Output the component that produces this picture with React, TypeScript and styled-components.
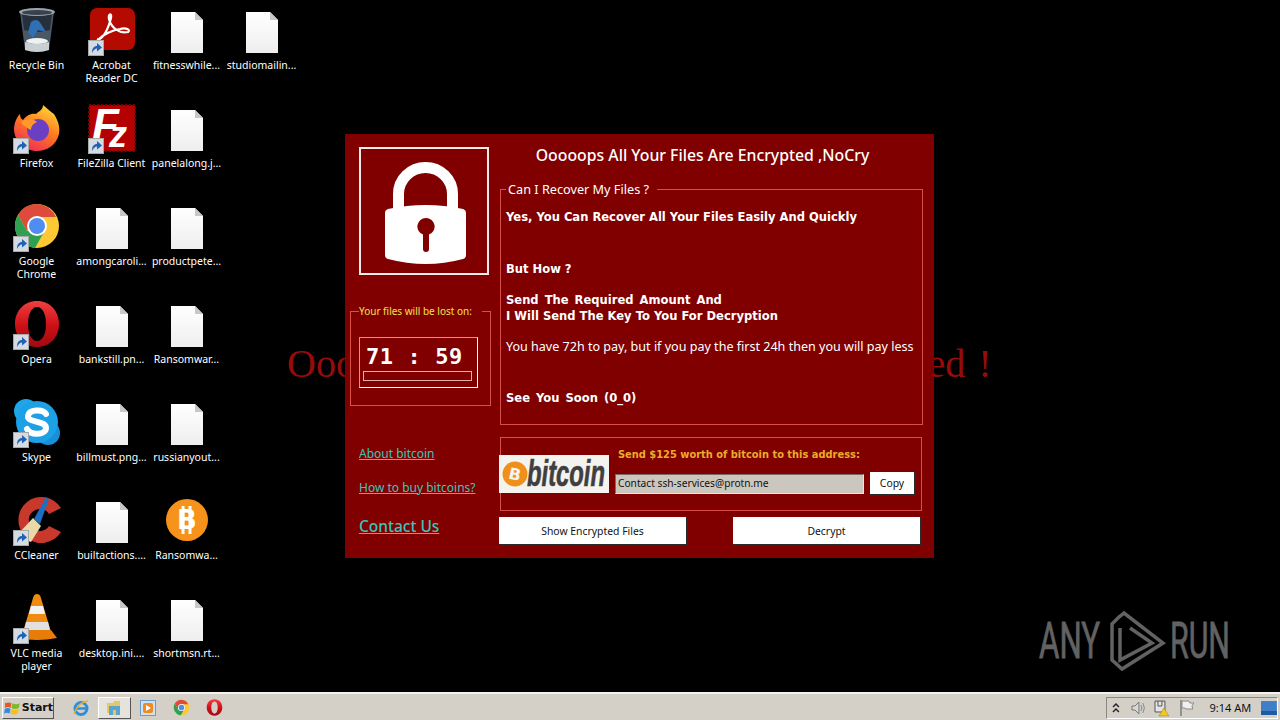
import React from 'react';
import styled, { createGlobalStyle } from 'styled-components';

const MAROON = '#800000';
const EDGE = '#d8504c';
const LINK = '#3cc4bc';
const UI_FONT = '"Noto Sans", "DejaVu Sans", sans-serif';

const GlobalStyle = createGlobalStyle`
  html, body {
    margin: 0;
    height: 100%;
    background: #000;
    overflow: hidden;
  }
  #root {
    height: 100%;
  }
`;

const Screen = styled.div`
  height: 720px;
  display: flex;
  flex-flow: column;
  font-family: ${UI_FONT};
`;

const Desktop = styled.div`
  position: relative;
  flex: 1;
  background: #000;
`;

const IconGrid = styled.div`
  display: grid;
  grid-template-columns: repeat(4, 75px);
  grid-auto-rows: 98px;
  margin-left: -1px;
`;

const IconCell = styled.div<{ $col: number; $row: number }>`
  grid-column: ${props => props.$col};
  grid-row: ${props => props.$row};
  display: flex;
  flex-flow: column;
  align-items: center;
`;

const IconArt = styled.div`
  position: relative;
  width: 48px;
  height: 48px;
  margin-top: 6px;

  svg {
    display: block;
  }
`;

const ShortcutBadge = styled.svg`
  position: absolute;
  left: 0;
  bottom: -2px;
`;

const IconLabel = styled.div`
  width: 75px;
  margin-top: 5px;
  color: #fff;
  font-size: 10.5px;
  line-height: 13px;
  text-align: center;
  white-space: pre-line;
`;

const Wallpaper = styled.div`
  position: absolute;
  left: 287px;
  top: 339px;
  color: #960c0c;
  font: 40px/50px 'Liberation Serif', serif;
  word-spacing: 12.6px;
  white-space: nowrap;
`;

const WallpaperEnd = styled.span`
  word-spacing: 3px;
`;

const Watermark = styled.svg`
  position: absolute;
  left: 1036px;
  top: 606px;
`;

const Window = styled.div`
  position: absolute;
  left: 345px;
  top: 134px;
  width: 589px;
  height: 424px;
  box-sizing: border-box;
  display: flex;
  gap: 8px;
  padding: 13px 13px 0 5px;
  background: ${MAROON};
`;

const LeftColumn = styled.div`
  width: 141px;
  display: flex;
  flex-flow: column;
`;

const LockFrame = styled.div`
  width: 130px;
  height: 128px;
  box-sizing: border-box;
  margin-left: 9px;
  border: 2px solid #f4eaea;

  svg {
    display: block;
  }
`;

const TimerBox = styled.fieldset`
  width: 141px;
  height: 101px;
  box-sizing: border-box;
  margin: 30px 0 0;
  padding: 0 0 0 8px;
  border: 1px solid ${EDGE};
`;

const TimerLegend = styled.legend`
  padding: 0 10px 0 0;
  color: #f2e04b;
  font-size: 10px;
  line-height: 13px;
`;

const Clock = styled.div`
  width: 119px;
  height: 51px;
  box-sizing: border-box;
  margin-top: 19px;
  padding: 7px 0 0 3px;
  border: 1px solid #fff;
  border-top-color: #b9a0a0;
  border-left-color: #b9a0a0;
`;

const ClockDigits = styled.div`
  padding-left: 3px;
  color: #fff;
  font: bold 22px/24px 'DejaVu Sans Mono', monospace;
  letter-spacing: 0.6px;
  white-space: pre;
`;

const ClockBar = styled.div`
  width: 109px;
  height: 10px;
  box-sizing: border-box;
  margin-top: 2px;
  border: 1px solid #e2b0b0;
`;

const LinkList = styled.div`
  display: flex;
  flex-flow: column;
  align-items: flex-start;
  margin: 40px 0 0 9px;
`;

const HelpLink = styled.a<{ $big?: boolean }>`
  color: ${LINK};
  font-size: ${props => (props.$big ? '15.5px' : '12px')};
  font-weight: ${props => (props.$big ? 500 : 400)};
  line-height: ${props => (props.$big ? '20px' : '16px')};
  margin-top: ${props => (props.$big ? '2px' : 0)};
  margin-bottom: ${props => (props.$big ? 0 : '18px')};
  text-decoration: underline;
`;

const RightColumn = styled.div`
  flex: 1;
  display: flex;
  flex-flow: column;
`;

const Title = styled.div`
  height: 30px;
  padding-right: 17px;
  color: #fff;
  font-size: 15.8px;
  font-weight: 500;
  line-height: 17px;
  text-align: center;
  white-space: nowrap;
`;

const InfoBox = styled.fieldset`
  width: 421px;
  height: 243px;
  box-sizing: border-box;
  margin: 5px 0 0 1px;
  padding: 0 0 0 5px;
  border: 1px solid ${EDGE};
`;

const InfoLegend = styled.legend`
  margin-left: 0;
  padding: 0 8px 0 2px;
  color: #fff;
  font-size: 12.7px;
  line-height: 15px;
  white-space: nowrap;
`;

const Strong = styled.div<{ $top: number; $wide?: boolean }>`
  margin-top: ${props => props.$top}px;
  color: #fff;
  font: bold 11.55px/16px 'DejaVu Sans', sans-serif;
  word-spacing: ${props => (props.$wide ? '2px' : 0)};
  white-space: nowrap;
`;

const Note = styled.div`
  width: 416px;
  height: 18px;
  margin-top: 14px;
  background: ${MAROON};
  color: #fff;
  font-size: 12.55px;
  line-height: 18px;
  white-space: nowrap;
`;

const PayBox = styled.div`
  position: relative;
  width: 422px;
  height: 74px;
  box-sizing: border-box;
  margin: 12px 0 0 1px;
  padding: 9px 5px 0 114px;
  border: 1px solid ${EDGE};
`;

const BitcoinLogo = styled.svg`
  position: absolute;
  left: -2px;
  top: 17px;
`;

const PayText = styled.div`
  padding-left: 3px;
  color: #e8ac2c;
  font: bold 9.9px/16px 'DejaVu Sans', sans-serif;
  white-space: nowrap;
`;

const PayRow = styled.div`
  display: flex;
  align-items: center;
  justify-content: space-between;
  margin-top: 9px;
`;

const AddressField = styled.div`
  width: 249px;
  height: 20px;
  box-sizing: border-box;
  padding-left: 2px;
  border: 1px solid #7c6a6a;
  border-right-color: #e8e4dc;
  border-bottom-color: #e8e4dc;
  background: #cbc7bf;
  color: #111;
  font-size: 10.2px;
  line-height: 17px;
  white-space: nowrap;
`;

const WinButton = styled.button<{ $width: number; $height: number }>`
  width: ${props => props.$width}px;
  height: ${props => props.$height}px;
  box-sizing: border-box;
  padding: 0;
  border: none;
  border-right: 2px solid #2a2a2a;
  border-bottom: 2px solid #2a2a2a;
  background: #fff;
  color: #111;
  font-family: ${UI_FONT};
  font-size: 10.4px;
`;

const ButtonRow = styled.div`
  display: flex;
  justify-content: space-between;
  width: 423px;
  margin-top: 6px;
`;

const Taskbar = styled.div`
  height: 28px;
  box-sizing: border-box;
  display: flex;
  align-items: center;
  padding: 1px 2px 0;
  border-top: 2px solid #f4f2ee;
  background: #d4d0c8;
`;

const StartButton = styled.div`
  width: 52px;
  height: 22px;
  box-sizing: border-box;
  display: flex;
  align-items: center;
  gap: 1px;
  padding-left: 1px;
  border: 1px solid #fff;
  border-right-color: #555;
  border-bottom-color: #555;
  color: #111;
  font: bold 11px 'DejaVu Sans', sans-serif;
`;

const QuickLaunch = styled.div`
  display: flex;
  align-items: center;
  margin-left: 10px;
`;

const QuickItem = styled.div<{ $active?: boolean }>`
  width: 33.5px;
  height: 22px;
  box-sizing: border-box;
  display: flex;
  align-items: center;
  justify-content: center;
  border: 1px solid transparent;
  ${props =>
    props.$active &&
    `
    border-color: #fff #555 #555 #fff;
    background: #e6e3dc;
  `}
`;

const Tray = styled.div`
  width: 172px;
  height: 22px;
  box-sizing: border-box;
  display: flex;
  align-items: center;
  margin-left: auto;
  padding-left: 4px;
  border: 1px solid #8a8780;
  border-right-color: #fff;
  border-bottom-color: #fff;
`;

const TrayGlyph = styled.svg<{ $gap: number }>`
  margin-left: ${props => props.$gap}px;
`;

const TrayClock = styled.div`
  width: 52px;
  margin-left: 10px;
  color: #111;
  font-size: 11px;
  text-align: center;
  white-space: nowrap;
`;

const shortcutBadge = (
  <ShortcutBadge width="16" height="16" viewBox="0 0 16 16">
    <rect x="0.5" y="0.5" width="15" height="15" fill="#d4dbe2" stroke="#a8a8a8" />
    <path d="M4 13 C4 8 6 6 9 6 V3 L14 7.5 L9 11.5 V8.5 C7 8.5 5.5 10 4 13Z" fill="#1f62b4" />
  </ShortcutBadge>
);

const RecycleArt = () => (
  <svg width="48" height="48" viewBox="0 0 48 48">
    <path d="M7 6 L41 6 L36 44 Q24 48 12 44Z" fill="#4a5866" />
    <path d="M9 8 L39 8 L37 24 Q24 28 11 24Z" fill="#26303c" />
    <ellipse cx="24" cy="6" rx="18" ry="4" fill="#98a4ae" />
    <ellipse cx="24" cy="6.5" rx="15" ry="2.5" fill="#39424c" />
    <path d="M18 16 Q24 11 28 18 L33 26 L25 24 L20 32 L15 26Z" fill="#2f6fb4" />
    <path d="M12 36 Q24 40 36 36 L36 44 Q24 48 12 44Z" fill="#c9d0d4" />
    <ellipse cx="24" cy="35" rx="11" ry="3" fill="#eef1f2" />
  </svg>
);

const AcrobatArt = () => (
  <svg width="48" height="48" viewBox="0 0 48 48">
    <rect x="2" y="2" width="45" height="42" rx="7" fill="#b30b00" />
    <path
      d="M9 33 C14 35 20 24 23 12 C24 6 20 8 21 13 C23 22 32 28 40 26 C43 24 38 21 32 23 C25 24 16 28 11 33"
      fill="none"
      stroke="#fff"
      strokeWidth="2.2"
    />
  </svg>
);

const FileArt = () => (
  <svg width="48" height="48" viewBox="0 0 48 48">
    <defs>
      <linearGradient id="pageFill" x1="0" y1="0" x2="0" y2="1">
        <stop offset="0" stopColor="#ffffff" />
        <stop offset="1" stopColor="#eeeeee" />
      </linearGradient>
    </defs>
    <path d="M8 6 H32 L40 14 V47 H8Z" fill="url(#pageFill)" />
    <path d="M32 6 L40 14 H32Z" fill="#c8c8c8" />
  </svg>
);

const FirefoxArt = () => (
  <svg width="48" height="48" viewBox="0 0 48 48">
    <defs>
      <linearGradient id="foxFlame" x1="0.7" y1="0" x2="0.2" y2="1">
        <stop offset="0" stopColor="#ffd43a" />
        <stop offset="0.45" stopColor="#ff7a1f" />
        <stop offset="1" stopColor="#f0245c" />
      </linearGradient>
    </defs>
    <path
      d="M30 1 C36 6 38 8 41 10 C46 18 47 24 46 30 C43 42 33 47 24 47 C12 47 2 38 1 26 C1 20 3 14 7 10 C7 13 8 15 10 16 C13 12 18 9 23 10 C26 7 30 6 30 1Z"
      fill="url(#foxFlame)"
    />
    <circle cx="25" cy="26" r="11" fill="#6a3fc4" />
    <path d="M8 18 C14 14 20 15 24 18 C20 20 18 22 18 26 C14 24 10 22 8 18Z" fill="#ff9a28" />
  </svg>
);

const FilezillaArt = () => (
  <svg width="48" height="48" viewBox="0 0 48 48">
    <rect x="1" y="1" width="46" height="46" fill="#b40000" stroke="#7a0000" strokeWidth="2" strokeDasharray="2 2" />
    <text x="4" y="36" fill="#fff" fontFamily="Liberation Sans, sans-serif" fontStyle="italic" fontWeight="700" fontSize="44">
      F
    </text>
    <text x="21" y="43" fill="#fff" fontFamily="Liberation Sans, sans-serif" fontStyle="italic" fontWeight="700" fontSize="36">
      z
    </text>
  </svg>
);

const ChromeArt = ({ size = 48 }: { size?: number }) => (
  <svg width={size} height={size} viewBox="0 0 48 48">
    <circle cx="24" cy="24" r="22" fill="#fcc934" />
    <path d="M24 2 A22 22 0 0 0 5 13 L14 29 L24 15 H43 A22 22 0 0 0 24 2Z" fill="#de4b3c" />
    <path d="M5 13 A22 22 0 0 0 22 46 L31 30 L14 29Z" fill="#2f9f52" />
    <circle cx="24" cy="24" r="10" fill="#fff" />
    <circle cx="24" cy="24" r="8" fill="#4f8df0" />
  </svg>
);

const OperaArt = ({ size = 48 }: { size?: number }) => (
  <svg width={size} height={size} viewBox="0 0 48 48">
    <defs>
      <linearGradient id="operaRed" x1="0" y1="0" x2="0" y2="1">
        <stop offset="0" stopColor="#f04040" />
        <stop offset="0.55" stopColor="#cc0f16" />
        <stop offset="1" stopColor="#a00a10" />
      </linearGradient>
    </defs>
    <path
      fillRule="evenodd"
      d="M24 1 C37 1 46 11 46 24 C46 37 37 47 24 47 C11 47 2 37 2 24 C2 11 11 1 24 1Z M24 7 C18 7 15 15 15 24 C15 33 18 41 24 41 C30 41 33 33 33 24 C33 15 30 7 24 7Z"
      fill="url(#operaRed)"
    />
  </svg>
);

const SkypeArt = () => (
  <svg width="48" height="48" viewBox="0 0 48 48">
    <circle cx="13" cy="13" r="12" fill="#1ea5ea" />
    <circle cx="35" cy="35" r="12" fill="#1790d8" />
    <circle cx="24" cy="24" r="21" fill="#1ca0e6" />
    <path
      d="M33 16 C30 11 16 11 15 18 C14 25 33 22 33 30 C33 37 18 38 14 31"
      fill="none"
      stroke="#fff"
      strokeWidth="6"
      strokeLinecap="round"
    />
  </svg>
);

const CcleanerArt = () => (
  <svg width="48" height="48" viewBox="0 0 48 48">
    <path d="M48 12 A23 23 0 1 0 48 36 L36 30 A11 11 0 1 1 36 18Z" fill="#c8392c" />
    <path d="M6 37 L20 22 L28 30 L18 46 Q10 44 6 37Z" fill="#e9d9a8" />
    <path d="M21 23 L33 1 L36 3 L27 28Z" fill="#1f6fc0" />
  </svg>
);

const BitcoinArt = () => (
  <svg width="48" height="48" viewBox="0 0 48 48">
    <circle cx="24" cy="24" r="21" fill="#f7931a" />
    <path d="M20 10 V38 M27 10 V38" stroke="#fff" strokeWidth="3" />
    <text x="24" y="33" textAnchor="middle" fill="#fff" fontFamily="DejaVu Sans, sans-serif" fontWeight="700" fontSize="26">
      B
    </text>
  </svg>
);

const VlcArt = () => (
  <svg width="48" height="48" viewBox="0 0 48 48">
    <path d="M24 0 Q27 0 28 4 L38 38 H10 L20 4 Q21 0 24 0Z" fill="#f08a10" />
    <path d="M18 12 H30 L32 20 H16Z" fill="#f2f2f2" />
    <path d="M13 28 H35 L37 36 H11Z" fill="#e0e0e0" />
    <path d="M4 44 L10 36 H38 L44 44 Q24 48 4 44Z" fill="#e87c08" />
  </svg>
);

const desktopIcons = [
  { col: 1, row: 1, label: 'Recycle Bin', art: <RecycleArt /> },
  { col: 2, row: 1, label: 'Acrobat\nReader DC', art: <AcrobatArt />, link: true },
  { col: 3, row: 1, label: 'fitnesswhile...', art: <FileArt /> },
  { col: 4, row: 1, label: 'studiomailin...', art: <FileArt /> },
  { col: 1, row: 2, label: 'Firefox', art: <FirefoxArt />, link: true },
  { col: 2, row: 2, label: 'FileZilla Client', art: <FilezillaArt />, link: true },
  { col: 3, row: 2, label: 'panelalong.j...', art: <FileArt /> },
  { col: 1, row: 3, label: 'Google\nChrome', art: <ChromeArt />, link: true },
  { col: 2, row: 3, label: 'amongcaroli...', art: <FileArt /> },
  { col: 3, row: 3, label: 'productpete...', art: <FileArt /> },
  { col: 1, row: 4, label: 'Opera', art: <OperaArt />, link: true },
  { col: 2, row: 4, label: 'bankstill.pn...', art: <FileArt /> },
  { col: 3, row: 4, label: 'Ransomwar...', art: <FileArt /> },
  { col: 1, row: 5, label: 'Skype', art: <SkypeArt />, link: true },
  { col: 2, row: 5, label: 'billmust.png...', art: <FileArt /> },
  { col: 3, row: 5, label: 'russianyout...', art: <FileArt /> },
  { col: 1, row: 6, label: 'CCleaner', art: <CcleanerArt />, link: true },
  { col: 2, row: 6, label: 'builtactions....', art: <FileArt /> },
  { col: 3, row: 6, label: 'Ransomwa...', art: <BitcoinArt /> },
  { col: 1, row: 7, label: 'VLC media\nplayer', art: <VlcArt />, link: true },
  { col: 2, row: 7, label: 'desktop.ini....', art: <FileArt /> },
  { col: 3, row: 7, label: 'shortmsn.rt...', art: <FileArt /> },
];

const App = () => (
  <>
    <GlobalStyle />
    <Screen>
      <Desktop>
        <Wallpaper>
          Ooops, your files have been <WallpaperEnd>encrypted !</WallpaperEnd>
        </Wallpaper>
        <IconGrid>
          {desktopIcons.map(icon => (
            <IconCell key={icon.label} $col={icon.col} $row={icon.row}>
              <IconArt>
                {icon.art}
                {icon.link && shortcutBadge}
              </IconArt>
              <IconLabel>{icon.label}</IconLabel>
            </IconCell>
          ))}
        </IconGrid>

        <Window>
          <LeftColumn>
            <LockFrame>
              <svg width="126" height="124" viewBox="0 0 126 124">
                <path
                  d="M37.5 60 V45 A27 26.5 0 0 1 91.5 45 V60"
                  fill="none"
                  stroke="#fff"
                  strokeWidth="11"
                />
                <path
                  fillRule="evenodd"
                  d="M27 60 Q65 52 102 60 Q105 61 105 64 L105 106 Q105 109 102 110 Q65 120 27 110 Q24 109 24 106 L24 64 Q24 61 27 60Z M65 69 A8.5 8.5 0 0 0 62 85.5 V100 A3 3 0 0 0 68 100 V85.5 A8.5 8.5 0 0 0 65 69Z"
                  fill="#fff"
                />
              </svg>
            </LockFrame>
            <TimerBox>
              <TimerLegend>Your files will be lost on:</TimerLegend>
              <Clock>
                <ClockDigits>71 : 59</ClockDigits>
                <ClockBar />
              </Clock>
            </TimerBox>
            <LinkList>
              <HelpLink>About bitcoin</HelpLink>
              <HelpLink>How to buy bitcoins?</HelpLink>
              <HelpLink $big>Contact Us</HelpLink>
            </LinkList>
          </LeftColumn>

          <RightColumn>
            <Title>Ooooops All Your Files Are Encrypted ,NoCry</Title>
            <InfoBox>
              <InfoLegend>Can I Recover My Files ?</InfoLegend>
              <Strong $top={12}>Yes, You Can Recover All Your Files Easily And Quickly</Strong>
              <Strong $top={36}>But How ?</Strong>
              <Strong $top={15} $wide>Send The Required Amount And</Strong>
              <Strong $top={0}>I Will Send The Key To You For Decryption</Strong>
              <Note>You have 72h to pay, but if you pay the first 24h then you will pay less</Note>
              <Strong $top={34} $wide>See You Soon (0_0)</Strong>
            </InfoBox>
            <PayBox>
              <BitcoinLogo width="110" height="38" viewBox="0 0 110 38">
                <rect width="110" height="38" fill="#f4f3ef" />
                <circle cx="16" cy="19" r="12.5" fill="#f0901c" />
                <text x="16" y="25" textAnchor="middle" fill="#f4f3ef" fontFamily="DejaVu Sans, sans-serif" fontWeight="700" fontSize="16" transform="rotate(12 16 19)">
                  B
                </text>
                <text x="28" y="31" fill="#3f3f3f" stroke="#3f3f3f" strokeWidth="0.6" fontFamily="Liberation Sans, sans-serif" fontStyle="italic" fontWeight="700" fontSize="36" textLength="78" lengthAdjust="spacingAndGlyphs">
                  bitcoin
                </text>
              </BitcoinLogo>
              <PayText>Send $125 worth of bitcoin to this address:</PayText>
              <PayRow>
                <AddressField>Contact ssh-services@protn.me</AddressField>
                <WinButton $width={46} $height={24}>Copy</WinButton>
              </PayRow>
            </PayBox>
            <ButtonRow>
              <WinButton $width={189} $height={29}>Show Encrypted Files</WinButton>
              <WinButton $width={189} $height={29}>Decrypt</WinButton>
            </ButtonRow>
          </RightColumn>
        </Window>

        <Watermark width="200" height="70" viewBox="0 0 200 70">
          <text x="3" y="52" fill="#626262" stroke="#626262" strokeWidth="0.8" fontFamily="Roboto, sans-serif" fontSize="50" textLength="61" lengthAdjust="spacingAndGlyphs">
            ANY
          </text>
          <text x="134" y="52" fill="#626262" stroke="#626262" strokeWidth="0.8" fontFamily="Roboto, sans-serif" fontSize="50" textLength="60" lengthAdjust="spacingAndGlyphs">
            RUN
          </text>
          <path
            d="M84 10 L76 18 V54 L86 63 L127 37 L88 7 L82 12 M94 22 L116 37 L84 54 V22"
            fill="none"
            stroke="#626262"
            strokeWidth="3.5"
          />
        </Watermark>
      </Desktop>

      <Taskbar>
        <StartButton>
          <svg width="18" height="16" viewBox="0 0 18 16">
            <path d="M1 3 Q5 1 8 3 L7 8 Q4 6 1 8Z" fill="#e8562a" />
            <path d="M9 3 Q13 5 17 3 L16 8 Q12 10 8 8Z" fill="#7fba2c" />
            <path d="M1 9 Q4 7 7 9 L6 14 Q3 12 0 14Z" fill="#2f8ae0" />
            <path d="M8 9 Q12 11 16 9 L15 14 Q11 16 7 14Z" fill="#f4c020" />
          </svg>
          Start
        </StartButton>
        <QuickLaunch>
          <QuickItem>
            <svg width="18" height="18" viewBox="0 0 18 18">
              <circle cx="9" cy="9.5" r="6" fill="none" stroke="#2f8fd8" strokeWidth="3" />
              <path d="M3 9.5 H15" stroke="#2f8fd8" strokeWidth="2.5" />
              <path d="M2 15 Q6 3 16 2" fill="none" stroke="#e8b030" strokeWidth="1.3" />
            </svg>
          </QuickItem>
          <QuickItem $active>
            <svg width="18" height="17" viewBox="0 0 18 17">
              <path d="M2 4 H8 L9 2 H15 V14 H2Z" fill="#e6c860" />
              <rect x="4" y="7" width="11" height="9" fill="#5aa6d0" />
              <rect x="8" y="11" width="3" height="5" fill="#e6c860" />
            </svg>
          </QuickItem>
          <QuickItem>
            <svg width="18" height="18" viewBox="0 0 18 18">
              <rect x="1.5" y="1.5" width="15" height="15" fill="#cfe0f0" stroke="#6a9ccc" />
              <rect x="4" y="4" width="10" height="10" rx="2" fill="#f08a20" />
              <path d="M7 6 L12 9 L7 12Z" fill="#fff" />
            </svg>
          </QuickItem>
          <QuickItem>
            <ChromeArt size={17} />
          </QuickItem>
          <QuickItem>
            <OperaArt size={17} />
          </QuickItem>
        </QuickLaunch>
        <Tray>
          <TrayGlyph $gap={0} width="10" height="12" viewBox="0 0 10 12">
            <path d="M2 5 L5 2 L8 5 M2 10 L5 7 L8 10" fill="none" stroke="#222" strokeWidth="1.4" />
          </TrayGlyph>
          <TrayGlyph $gap={9} width="18" height="16" viewBox="0 0 18 16">
            <path d="M2 6 H5 L9 2 V14 L5 10 H2Z" fill="#d8d8d8" stroke="#777" />
            <path d="M11 5 Q13 8 11 11 M13 3 Q16 8 13 13" fill="none" stroke="#888" />
          </TrayGlyph>
          <TrayGlyph $gap={5} width="18" height="18" viewBox="0 0 18 18">
            <path d="M2 2 H12 V13 H2Z" fill="#e4e4e4" stroke="#555" />
            <path d="M5 2 V7 H9 V2" fill="none" stroke="#555" />
            <path d="M11 9 L16 17 H6Z" fill="#f4c820" stroke="#a88810" strokeWidth="0.6" />
          </TrayGlyph>
          <TrayGlyph $gap={8} width="16" height="18" viewBox="0 0 16 18">
            <path d="M2 1 V17" stroke="#777" strokeWidth="1.4" />
            <path d="M3 2 H10 L11 4 H15 L13 7 L14 10 H7 L6 9 H3Z" fill="#f0f0f0" stroke="#888" />
          </TrayGlyph>
          <TrayClock>9:14 AM</TrayClock>
          <TrayGlyph $gap={5} width="16" height="14" viewBox="0 0 16 14">
            <rect width="16" height="14" fill="#3f7fc8" />
            <rect y="10" width="16" height="4" fill="#1e5aa0" />
          </TrayGlyph>
        </Tray>
      </Taskbar>
    </Screen>
  </>
);

export default App;
